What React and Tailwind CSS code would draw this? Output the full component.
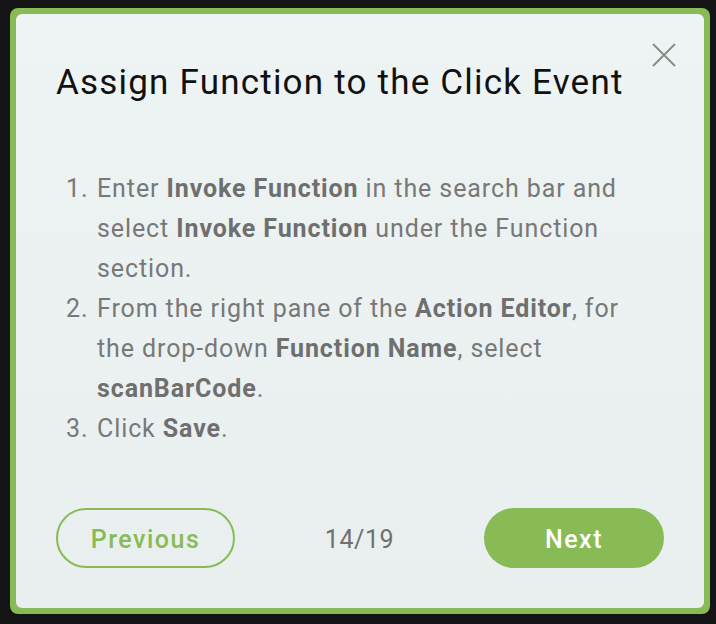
export default function App() {
  const B = "font-bold text-[#6f6f6f]";
  return (
    <div className="w-full h-[624px] bg-[#141414] pt-[8px] pl-[10px]" style={{ fontFamily: "Roboto, 'Noto Sans', sans-serif" }}>
      <div className="w-[700px] h-[606px] rounded-[8px] bg-[#88bb55] p-[6px]">
        <div className="relative h-full rounded-[6px] bg-gradient-to-b from-[#eef4f4] to-[#e9efef] px-[40px] pt-[49px] pb-[40px] flex flex-col">
          <button className="absolute top-[28px] right-[27px] w-[26px] h-[26px] flex items-center justify-center text-[#8a8a8a]">
            <svg width="26" height="26" viewBox="0 0 26 26" fill="none" stroke="currentColor" strokeWidth="2">
              <path d="M2 2 L24 24 M24 2 L2 24" />
            </svg>
          </button>
          <h1 className="text-[35px] leading-[40px] font-normal text-[#111111] tracking-[1.2px]">Assign Function to the Click Event</h1>
          <ol className="mt-[66px] text-[25px] leading-[40px] text-[#787878] pl-[10px] tracking-[0.9px]">
            <li className="flex">
              <span className="w-[31px] shrink-0">1.</span>
              <span className="w-[555px]">Enter <b className={B}>Invoke Function</b> in the search bar and select <b className={B}>Invoke Function</b> under the Function section.</span>
            </li>
            <li className="flex">
              <span className="w-[31px] shrink-0">2.</span>
              <span className="w-[555px]">From the right pane of the <b className={B}>Action Editor</b>, for the drop-down <b className={B}>Function Name</b>, select <b className={B}>scanBarCode</b>.</span>
            </li>
            <li className="flex">
              <span className="w-[31px] shrink-0">3.</span>
              <span className="w-[555px]">Click <b className={B}>Save</b>.</span>
            </li>
          </ol>
          <div className="mt-auto flex items-center justify-between">
            <button className="w-[179px] h-[60px] pt-[3px] rounded-full border-2 border-[#88bb55] text-[#88bb55] text-[25px] font-medium tracking-[1.5px]">Previous</button>
            <span className="pt-[3px] text-[25px] text-[#707070] tracking-[0.6px]">14/19</span>
            <button className="w-[180px] h-[60px] pt-[3px] rounded-full bg-[#88bb55] text-white text-[25px] font-medium tracking-[1.5px]">Next</button>
          </div>
        </div>
      </div>
    </div>
  );
}
